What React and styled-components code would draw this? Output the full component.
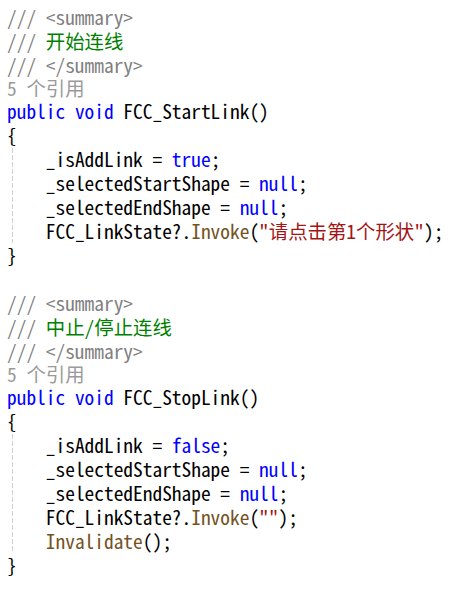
import React from 'react'
import styled, { createGlobalStyle } from 'styled-components'

const GlobalStyle = createGlobalStyle`
  html, body {
    margin: 0;
    padding: 0;
    background: #ffffff;
  }
`

const colors = {
  plain: '#000000',
  doc: '#808080',
  comment: '#008000',
  lens: '#9a9a9a',
  keyword: '#0000ff',
  method: '#74531f',
  string: '#a31515',
}

const Editor = styled.div`
  display: flex;
  flex-flow: column;
  padding: 5px 0 0 7px;
  font-family: "Noto Sans Mono CJK SC", "Liberation Mono", monospace;
  font-size: 19.4px;
  color: #000;
  white-space: pre;
`

const Line = styled.div`
  height: ${(p) => (p.lens ? 22 : 24)}px;
  line-height: ${(p) => (p.lens ? 22 : 24)}px;
`

const Tok = styled.span`
  color: ${(p) => colors[p.k || 'plain']};
`

const Body = styled.div`
  margin-left: 5px;
  padding-left: ${19.4 * 2 - 5}px;
  background: repeating-linear-gradient(
      to bottom,
      #cfcfcf 0 5px,
      transparent 5px 7px
    )
    no-repeat left 1px / 1px calc(100% - 1px);
`

const Doc = ({ text }) => (
  <>
    <Line>
      <Tok k="doc">/// &lt;summary&gt;</Tok>
    </Line>
    <Line>
      <Tok k="doc">/// </Tok>
      <Tok k="comment">{text}</Tok>
    </Line>
    <Line>
      <Tok k="doc">/// &lt;/summary&gt;</Tok>
    </Line>
    <Line lens>
      <Tok k="lens">5 个引用</Tok>
    </Line>
  </>
)

const Method = ({ name, summary, children }) => (
  <>
    <Doc text={summary} />
    <Line>
      <Tok k="keyword">public</Tok> <Tok k="keyword">void</Tok> {name}()
    </Line>
    <Line>{'{'}</Line>
    <Body>{children}</Body>
    <Line>{'}'}</Line>
  </>
)

const Assign = ({ left, value }) => (
  <Line>
    {left} = <Tok k="keyword">{value}</Tok>;
  </Line>
)

const App = () => (
  <>
    <GlobalStyle />
    <Editor>
      <Method name="FCC_StartLink" summary="开始连线">
        <Assign left="_isAddLink" value="true" />
        <Assign left="_selectedStartShape" value="null" />
        <Assign left="_selectedEndShape" value="null" />
        <Line>
          FCC_LinkState?.<Tok k="method">Invoke</Tok>(
          <Tok k="string">"请点击第1个形状"</Tok>);
        </Line>
      </Method>
      <Line />
      <Method name="FCC_StopLink" summary="中止/停止连线">
        <Assign left="_isAddLink" value="false" />
        <Assign left="_selectedStartShape" value="null" />
        <Assign left="_selectedEndShape" value="null" />
        <Line>
          FCC_LinkState?.<Tok k="method">Invoke</Tok>(<Tok k="string">""</Tok>);
        </Line>
        <Line>
          <Tok k="method">Invalidate</Tok>();
        </Line>
      </Method>
    </Editor>
  </>
)

export default App
